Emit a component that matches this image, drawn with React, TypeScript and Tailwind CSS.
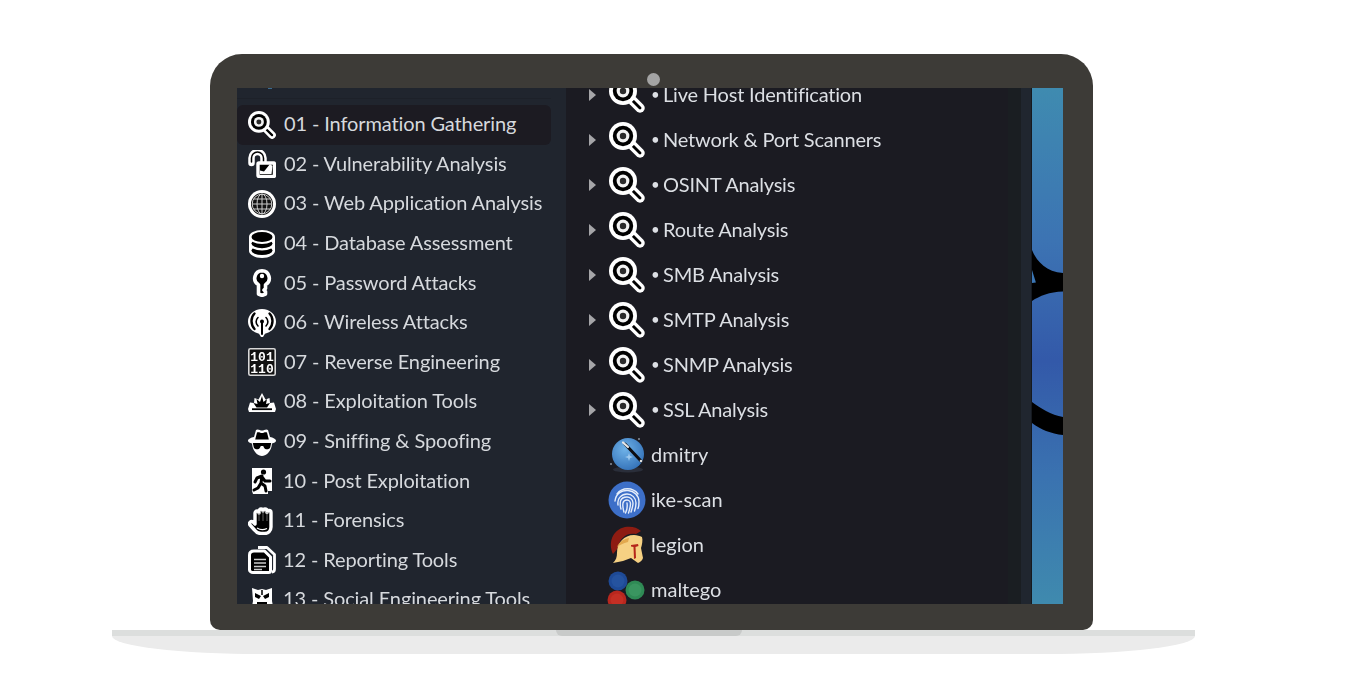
import React from "react";

const stroke = { stroke: "#fff", strokeLinejoin: "round" as const, strokeLinecap: "round" as const };

function Search({ className }: { className: string }) {
  return (
    <svg viewBox="0 0 36 36" className={className}>
      <line x1="24" y1="24" x2="31" y2="31" stroke="#fff" strokeWidth="9.500" strokeLinecap="round" />
      <line x1="24" y1="24" x2="31" y2="31" stroke="#000" strokeWidth="2.800" strokeLinecap="round" />
      <circle cx="14" cy="14" r="14" fill="#fff" />
      <circle cx="14" cy="14" r="10.200" fill="#000" />
      <circle cx="14" cy="14" r="6.400" fill="#f2f2f2" />
      <circle cx="14" cy="14" r="3.200" fill="#2a2a2a" />
    </svg>
  );
}

const I = ({ children }: { children: React.ReactNode }) => (
  <svg viewBox="0 0 28 28" className="w-7 h-7 shrink-0">{children}</svg>
);

const Lock = () => (
  <I>
    <path d="M3.500 13V8a6 6 0 0 1 12 0v4" fill="none" stroke="#fff" strokeWidth="6.500" strokeLinecap="round" />
    <path d="M3.500 12V8a6 6 0 0 1 12 0v4" fill="none" stroke="#000" strokeWidth="1.500" strokeLinecap="round" />
    <rect x="10" y="13" width="16.500" height="13.500" rx="1" fill="#000" {...stroke} strokeWidth="3.400" />
    <path d="M12 24v-3.500l4 1 6-7.500 2.500 2-1 8z" fill="#fff" />
  </I>
);

const Globe = () => (
  <I>
    <circle cx="14" cy="14" r="14" fill="#fff" />
    <circle cx="14" cy="14" r="11" fill="#111" />
    <g fill="none" stroke="#ccc" strokeWidth="1">
      <circle cx="14" cy="14" r="9.800" />
      <ellipse cx="14" cy="14" rx="5" ry="10" />
      <path d="M14 4v20M4 14h20M5.500 9h17M5.500 19h17" />
    </g>
  </I>
);

const Db = () => (
  <I>
    <path d="M1 7v14c0 3.600 5.800 7 13 7s13-3.400 13-7V7z" fill="#fff" />
    <ellipse cx="14" cy="20.500" rx="10.500" ry="4.600" fill="#000" />
    <ellipse cx="14" cy="14" rx="13" ry="6.500" fill="#fff" />
    <ellipse cx="14" cy="13.600" rx="10.500" ry="4.600" fill="#000" />
    <ellipse cx="14" cy="7" rx="13" ry="7" fill="#fff" />
    <ellipse cx="14" cy="7" rx="10.500" ry="5" fill="#000" />
  </I>
);

const Key = () => (
  <I>
    <path d="M14 1.800a7.500 7.500 0 0 0-3.500 14V25l3.500 1.500 3.500-1.500v-2.500l-1.500-1.500 1.500-1.500v-3.700a7.500 7.500 0 0 0-3.500-14z" fill="#000" {...stroke} strokeWidth="3.600" />
    <circle cx="14" cy="7" r="2.200" fill="#fff" />
  </I>
);

const Wifi = () => (
  <I>
    <path d="M14 0C6 0 0 5.600 0 12.600c0 5 3 8.800 7 10.600l4 1.600L13 28h2l2-3.200 4-1.600c4-1.800 7-5.600 7-10.600C28 5.600 22 0 14 0z" fill="#fff" />
    <g fill="none" stroke="#000" strokeWidth="2.400" strokeLinecap="round">
      <path d="M6.500 4.500c-4 4-4 11 0 15.500M21.500 4.500c4 4 4 11 0 15.500" />
      <path d="M10 8.500c-2.500 2.400-2.500 6 0 8.500M18 8.500c2.500 2.400 2.500 6 0 8.500" strokeWidth="1.600" />
      <path d="M14 13v12" strokeWidth="2" />
    </g>
    <circle cx="14" cy="12.500" r="2" fill="#000" />
  </I>
);

const Bin = () => (
  <I>
    <rect x="0.800" y="0.800" width="26.400" height="26.400" rx="1.500" fill="#111" stroke="#d8d8d8" strokeWidth="1.600" />
    <text x="14" y="12.500" textAnchor="middle" fill="#fff" fontSize="13" fontWeight="700" fontFamily="'Liberation Mono', monospace">101</text>
    <text x="14" y="24.500" textAnchor="middle" fill="#fff" fontSize="13" fontWeight="700" fontFamily="'Liberation Mono', monospace">110</text>
  </I>
);

const Burst = () => (
  <I>
    <g transform="translate(0 -3)">
      <path d="M0 24l2-6.500 4 .5.500-5 4 1.500L14 8l3.500 6.500 4-1.500.500 5 4-.5 2 6.500-1 3H1z" fill="#fff" />
      <path d="M14 11l1.500 6 3.500-3-1 5 4-1-3 4.500H8.500L5.500 18l4 1-1-5 3.500 3z" fill="#000" />
      <rect x="4" y="23.300" width="20" height="1.800" fill="#000" />
    </g>
  </I>
);

const Spy = () => (
  <I>
    <path d="M8 2c2-1.500 4 .5 6 .5S18 .5 20 2l2 7c3 .7 6 1.900 6 3.700 0 1.500-2 2.300-4 2.700l-.5 3.300C22 24 18 28 14 28s-8-4-9.500-9.300L4 15.400C2 15 0 14.200 0 12.700c0-1.800 3-3 6-3.700z" fill="#fff" />
    <path d="M9 4.500c2-.8 3.500.5 5 .5s3-1.300 5-.5l1.800 7H7.200z" fill="#000" />
    <path d="M4.800 15h18.400l-1 4.500c-.5 2-5 2.500-6 .5l-1-2h-2.400l-1 2c-1 2-5.500 1.500-6-.5z" fill="#000" />
  </I>
);

const Exit = () => (
  <I>
    <path d="M4 1h20v23h-4v3H5l-1-3z" fill="#fff" />
    <g stroke="#000" fill="none" strokeWidth="3" strokeLinecap="round" strokeLinejoin="round">
      <path d="M14 9l-5 2-2 4M14 9l-1 7 4 3 1 5M13 16l-3 5-4 2M14 10l3 4h5" />
    </g>
    <circle cx="15.500" cy="5" r="2.600" fill="#000" />
  </I>
);

const Hand = () => (
  <I>
    <path d="M7 11V6a2 2 0 0 1 4 0V4a2 2 0 0 1 4 0v0a2 2 0 0 1 4 0v1.500a2 2 0 0 1 4 0V20c0 4-3 6.500-6.500 6.500H13c-3 0-5-1.500-6.500-3.500l-4.500-5c-1.500-2 1-4.500 3-3L7 17z" fill="#000" {...stroke} strokeWidth="3.400" />
    <path d="M11 6v8M15 4v10M19 5v9" stroke="#777" strokeWidth="0.800" />
    <path d="M9 21c3 2 7 2 10 .5" fill="none" stroke="#fff" strokeWidth="1.300" />
  </I>
);

const Docs = () => (
  <I>
    <path d="M10 1.500h9l7.500 7V23c0 2-.5 3-2.500 3" fill="none" stroke="#fff" strokeWidth="2.800" strokeLinejoin="round" />
    <path d="M6 5h10.500l6 6v14c0 1-1 1.500-2 1.500H5C3 26.500 1.500 25 1.500 24V9C1.500 6.500 3 5 6 5z" fill="#000" {...stroke} strokeWidth="3" />
    <path d="M6 13.500h12M6 17h12M6 20.500h12M6 23.500h8" stroke="#ccc" strokeWidth="1.300" />
  </I>
);

const Social = () => (
  <I>
    <path d="M4 2l6 2 4-1 4 1 6-2v13l2 11H3l2-11z" fill="#fff" />
    <path d="M7 7l6 3-2 3-4-2zM21 7l-6 3 2 3 4-2zM9 16h10v4H9zM5 22h4v4H5zM19 22h4v4h-4z" fill="#000" />
    <path d="M14 4v5" stroke="#000" strokeWidth="1.500" />
  </I>
);

function Dmitry() {
  return (
    <svg viewBox="0 0 38 38" className="w-[38px] h-[38px] shrink-0">
      <defs>
        <radialGradient id="dm" cx="0.4" cy="0.35" r="0.75">
          <stop offset="0" stopColor="#6fb2e8" />
          <stop offset="1" stopColor="#2f6db5" />
        </radialGradient>
      </defs>
      <ellipse cx="20" cy="33.500" rx="15" ry="3" fill="#2a2e3a" />
      <circle cx="20" cy="18" r="16" fill="url(#dm)" />
      <path d="M20 22l1 3 1-3 3-1-3-1-1-3-1 3-3 1z" fill="#9cc8ee" />
      <line x1="17" y1="8" x2="33" y2="25" stroke="#0c0c10" strokeWidth="3" strokeLinecap="round" />
      <line x1="15" y1="6.500" x2="20" y2="11" stroke="#e8e8e8" strokeWidth="2.200" strokeLinecap="round" />
      <circle cx="31" cy="3" r="1" fill="#8a8f99" />
      <circle cx="3" cy="28" r="1" fill="#8a8f99" />
      <circle cx="33" cy="25" r="1.300" fill="#ddd" />
    </svg>
  );
}

function Finger() {
  return (
    <svg viewBox="0 0 38 38" className="w-[38px] h-[38px] shrink-0">
      <circle cx="19" cy="19" r="18.500" fill="#3d6fc8" />
      <g fill="none" stroke="#e6eefb" strokeWidth="1.400" strokeLinecap="round">
        <path d="M9 13c5-7 16-7 21 0" />
        <path d="M7 20c1-8 7-11 13-10.500 6 .5 11 5 11 11 0 3 0 5-1 7" />
        <path d="M10 24c-1-7 4-11 9-11s9 4 9 9c0 3-.5 5-1.500 8" />
        <path d="M13 28c-1-3-1-5-.5-8 1-3 4-4 6.500-4s6 2 6 6c0 3-1 6-2 9" />
        <path d="M16 31c-1-3-1.500-6-1-9 .5-2 2-3 4-3s3.500 2 3.500 4c0 3-1 6-2 9" />
        <path d="M19 22c.5 3 0 7-1.500 10" />
      </g>
    </svg>
  );
}

function Helmet() {
  return (
    <svg viewBox="0 0 38 38" className="w-[38px] h-[38px] shrink-0">
      <path d="M5 28C0 17 4 4 17 1c6-1 12 0 16 4l-5 3C18 6 11 13 10 22z" fill="#8e1c12" />
      <path d="M5 37c3-3 4-6 4-10 0-10 7-18 17-18 3 0 6 1 8 2 1 3 0 8-1 11l2 10c-1 3-3 4-5 5l-7-5-8 3z" fill="#f6d183" />
      <path d="M9 21c2-5 6-8 12-9l-1 4c-5 1-8 3-11 5z" fill="#e2a94e" />
      <path d="M23 19l7-1 .5 2-3 1 .5 11-2 1-.5-12-2.500-.5z" fill="#b5261a" />
    </svg>
  );
}

function Maltego() {
  return (
    <svg viewBox="0 0 38 38" className="w-[38px] h-[38px] shrink-0 overflow-visible">
      <circle cx="10" cy="10" r="9.500" fill="#1e4a96" />
      <circle cx="10" cy="10" r="6.500" fill="#25539f" />
      <circle cx="27" cy="19" r="9.500" fill="#2f8a55" />
      <circle cx="27" cy="19" r="6.500" fill="#3a9560" />
      <circle cx="9" cy="29" r="9.500" fill="#b8271e" />
      <circle cx="9" cy="29" r="6.500" fill="#c42f24" />
    </svg>
  );
}

const left: { icon: React.ReactNode; label: string; gap: string }[] = [
  { icon: <Search className="w-7 h-7 shrink-0" />, label: "01 - Information Gathering", gap: "ml-2" },
  { icon: <Lock />, label: "02 - Vulnerability Analysis", gap: "ml-2" },
  { icon: <Globe />, label: "03 - Web Application Analysis", gap: "ml-2" },
  { icon: <Db />, label: "04 - Database Assessment", gap: "ml-2" },
  { icon: <Key />, label: "05 - Password Attacks", gap: "ml-2" },
  { icon: <Wifi />, label: "06 - Wireless Attacks", gap: "ml-2" },
  { icon: <Bin />, label: "07 - Reverse Engineering", gap: "ml-2" },
  { icon: <Burst />, label: "08 - Exploitation Tools", gap: "ml-2" },
  { icon: <Spy />, label: "09 - Sniffing & Spoofing", gap: "ml-2" },
  { icon: <Exit />, label: "10 - Post Exploitation", gap: "ml-[7px]" },
  { icon: <Hand />, label: "11 - Forensics", gap: "ml-[7px]" },
  { icon: <Docs />, label: "12 - Reporting Tools", gap: "ml-[7px]" },
  { icon: <Social />, label: "13 - Social Engineering Tools", gap: "ml-[7px]" },
];

const folders = [
  "Live Host Identification",
  "Network & Port Scanners",
  "OSINT Analysis",
  "Route Analysis",
  "SMB Analysis",
  "SMTP Analysis",
  "SNMP Analysis",
  "SSL Analysis",
];

const apps: { icon: React.ReactNode; label: string }[] = [
  { icon: <Dmitry />, label: "dmitry" },
  { icon: <Finger />, label: "ike-scan" },
  { icon: <Helmet />, label: "legion" },
  { icon: <Maltego />, label: "maltego" },
];

function Wallpaper() {
  return (
    <svg viewBox="0 0 32 516" preserveAspectRatio="none" className="w-full h-full block">
      <defs>
        <linearGradient id="wp" x1="0" y1="0" x2="0" y2="1">
          <stop offset="0" stopColor="#3f8bb0" />
          <stop offset="0.3" stopColor="#3c73b3" />
          <stop offset="0.53" stopColor="#3359a9" />
          <stop offset="0.75" stopColor="#3a72b0" />
          <stop offset="1" stopColor="#3f8aae" />
        </linearGradient>
      </defs>
      <rect width="32" height="516" fill="url(#wp)" />
      <path d="M0 162C4 172 14 184 32 185V203.600C18 204 8 208 0 213Z" fill="#000" />
      <path d="M0 182L4 194.500 0 195Z" fill="#3b76b4" />
      <path d="M0 314C8 320 20 327 32 329V347C20 346 8 341 0 335Z" fill="#000" />
    </svg>
  );
}

export default function App() {
  return (
    <div className="w-full h-[691px] bg-white overflow-hidden pt-[54px] pl-[112px] font-['Lato','Noto_Sans',sans-serif]">
      <div className="w-[883px] h-[576px] ml-[98px] bg-[#3d3b37] rounded-t-[32px] rounded-b-[10px] flex flex-col">
        <div className="h-[34px] shrink-0 pt-4 pl-1 flex items-center justify-center">
          <div className="w-[13px] h-[13px] rounded-full bg-[#a4a4a4]" />
        </div>
        <div className="ml-[27px] w-[826px] h-[516px] flex overflow-hidden">
          <div className="w-[329px] shrink-0 bg-[#20252e] overflow-hidden">
            <div className="w-[314px] h-[11px] border-b border-[#1d2129] pl-[31px]">
              <div className="w-1 h-px bg-[#3a6b90]" />
            </div>
            <div className="w-[314px] pt-1.5 blur-[0.35px]">
              {left.map((r, i) => (
                <div
                  key={r.label}
                  className={
                    "h-[39.6px] pl-[11px] flex items-center rounded-md " +
                    (i === 0 ? "bg-[#1c1b22]" : "")
                  }
                >
                  {r.icon}
                  <span className={r.gap + " pb-[3px] text-[20px] leading-none tracking-[-0.12px] text-[#d6d9dd] whitespace-nowrap"}>{r.label}</span>
                </div>
              ))}
            </div>
          </div>
          <div className="flex-1 min-w-0 flex bg-[#1b1b22] overflow-hidden">
            <div className="flex-1 min-w-0 -mt-[15.5px] blur-[0.35px]">
              {folders.map((f) => (
                <div key={f} className="h-[45px] pl-[23px] flex items-center">
                  <svg viewBox="0 0 7 12" className="w-[7px] h-3 shrink-0">
                    <path d="M0 0l7 6-7 6z" fill="#a5a5a8" />
                  </svg>
                  <Search className="ml-[13px] w-9 h-9 shrink-0" />
                  <span className="ml-1.5 w-3 pb-[2px] text-[15px] leading-none text-[#dcdfe4]">•</span>
                  <span className="pb-[2px] text-[20px] leading-none tracking-[-0.2px] text-[#dcdfe4] whitespace-nowrap">{f}</span>
                </div>
              ))}
              {apps.map((a) => (
                <div key={a.label} className="h-[45px] pl-[42px] flex items-center">
                  {a.icon}
                  <span className="ml-[5px] pb-[2px] text-[20px] leading-none text-[#dcdfe4] whitespace-nowrap">{a.label}</span>
                </div>
              ))}
            </div>
            <div className="w-[13px] shrink-0 bg-[#1a1e22]" />
          </div>
          <div className="w-[10px] shrink-0 bg-[#20262f]" />
          <div className="w-px shrink-0 bg-[#15191f]" />
          <div className="w-[31px] shrink-0 blur-[0.4px]">
            <Wallpaper />
          </div>
        </div>
      </div>
      <div className="w-[1083px] h-[6px] bg-[#dcdedd] pl-[444px]">
        <div className="w-[186px] h-[6px] bg-[#c8cac9] rounded-b-lg" />
      </div>
      <div className="w-[1083px] h-[18px] bg-[#ebebeb] rounded-b-[150px_18px]" />
    </div>
  );
}
